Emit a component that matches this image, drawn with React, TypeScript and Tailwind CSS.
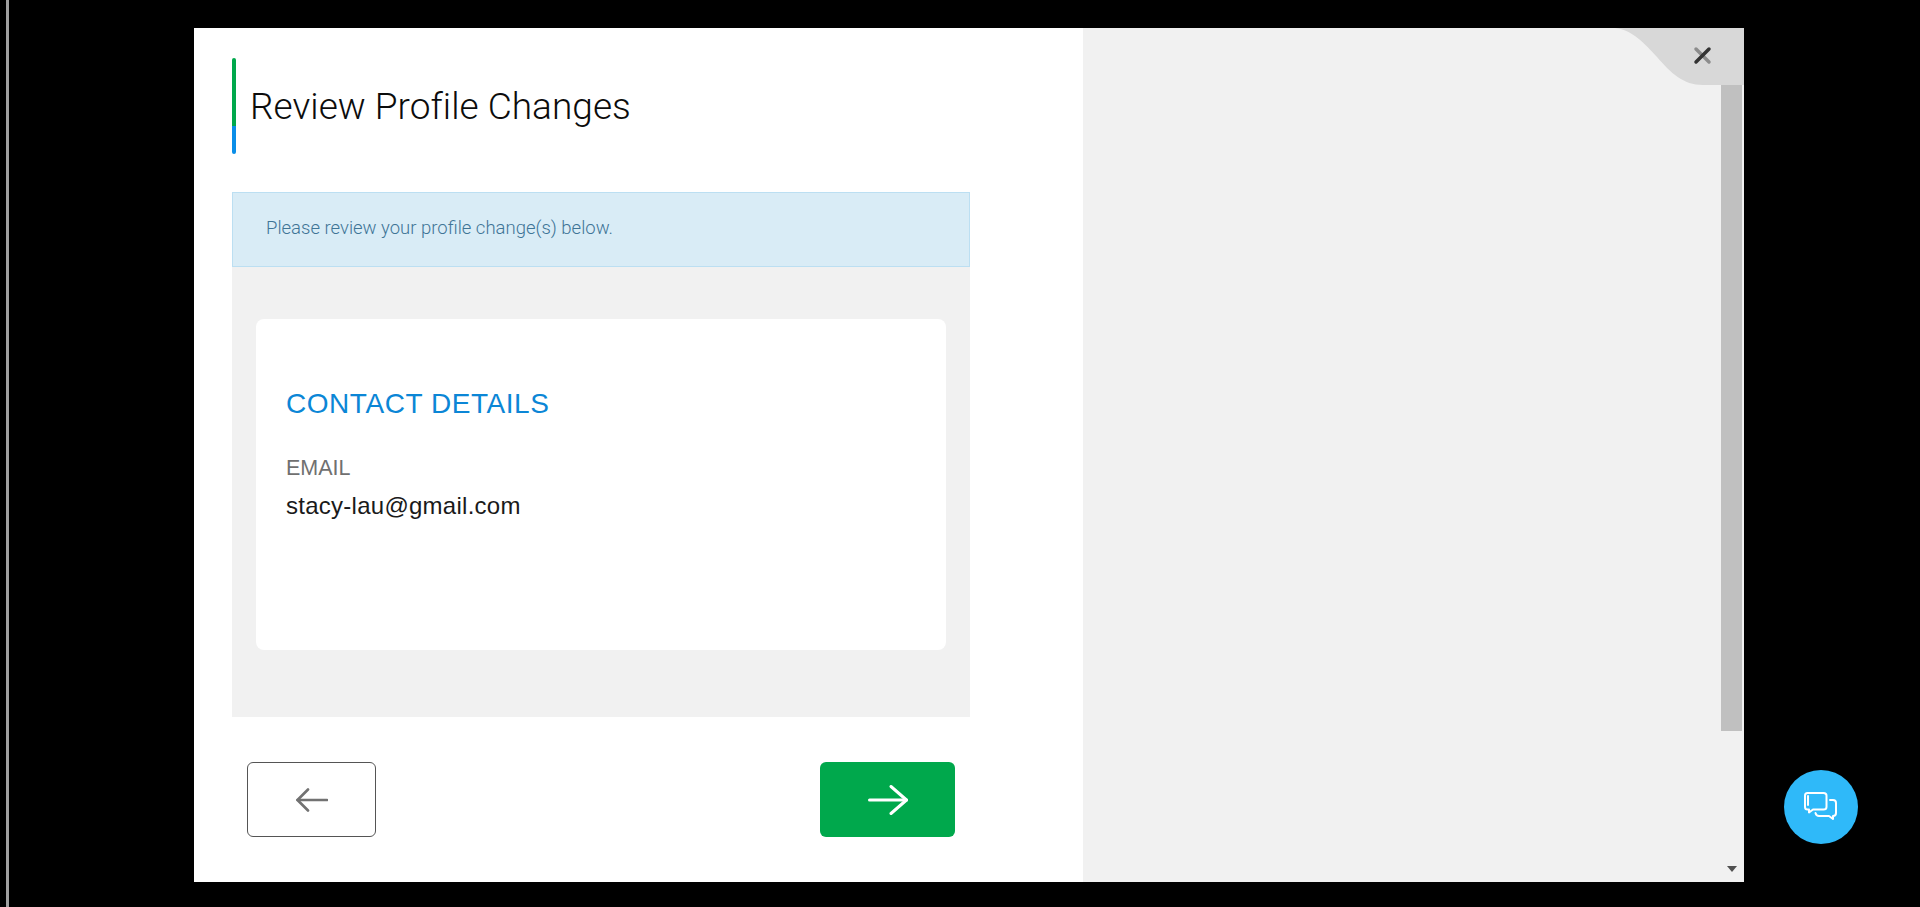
const sans = "font-['Liberation_Sans',Arial,sans-serif]";
const light = "font-['Roboto',Arial,sans-serif] font-light";

function ArrowLeft() {
  return (
    <svg width="32" height="24" viewBox="0 0 32 24" fill="none" stroke="#727272" strokeWidth="2.6" strokeLinecap="round" strokeLinejoin="round">
      <path d="M1.5 12H31" />
      <path d="M12 1.5L1.5 12L12 22.5" />
    </svg>
  );
}

function ArrowRight() {
  return (
    <svg width="40" height="30" viewBox="0 0 40 30" fill="none" stroke="#ffffff" strokeWidth="3" strokeLinecap="round" strokeLinejoin="round">
      <path d="M1.5 15H38.5" />
      <path d="M23 1.5L38.5 15L23 28.5" />
    </svg>
  );
}

function ChatIcon() {
  return (
    <svg width="34" height="30" viewBox="0 0 34 30" fill="none" stroke="#ffffff" strokeWidth="2" strokeLinecap="round" strokeLinejoin="round">
      <path d="M3.5 1H19.5C21 1 22.5 2 22.5 3.5V15C22.5 16.5 21 17.5 19.5 17.5H9L5 20.5V17.5H3.5C2 17.5 1 16.5 1 15V3.5C1 2 2 1 3.5 1Z" />
      <path d="M4 4V13" />
      <path d="M26 8H29C30.5 8 32 9 32 11V21C32 23 30.5 24 29 24V27L25 24H15C13 24 12 23 11.5 21" />
    </svg>
  );
}

export default function App() {
  return (
    <div className={`relative flex h-[907px] w-full overflow-hidden bg-black ${sans}`}>
      <div className="ml-[6px] h-full w-[3px] bg-[#a0a0a0]" />
      <div className="mb-[25px] ml-[185px] mt-[28px] flex w-[1550px]">
        <div className="flex w-[889px] flex-col bg-white pl-[38px]">
          <div className="mt-[30px] flex h-[96px] items-center">
            <div className="flex h-full w-[4px] flex-col overflow-hidden rounded-[2px]">
              <div className="h-[68px] bg-[#00a84c]" />
              <div className="flex-1 bg-[#0a8ee8]" />
            </div>
            <h1 className={`ml-[14px] text-[37px] leading-none tracking-[0.03px] text-[#0c0c0c] ${light}`}>Review Profile Changes</h1>
          </div>
          <div className={`mt-[38px] flex h-[75px] w-[738px] items-center border border-[#bcdff2] bg-[#d9ecf6] pb-[2px] pl-[33px] text-[18.5px] text-[#3f7596] ${light}`}>
            Please review your profile change(s) below.
          </div>
          <div className="w-[738px] bg-[#f1f1f1] px-[24px] pb-[67px] pt-[52px]">
            <div className="h-[331px] rounded-[8px] bg-white px-[30px] pt-[71px]">
              <h2 className="text-[28px] font-normal leading-none tracking-[0.55px] text-[#0b86d6]">CONTACT DETAILS</h2>
              <div className="mt-[40px] text-[21.5px] leading-none text-[#707070]">EMAIL</div>
              <div className="mt-[14px] text-[24px] leading-none tracking-[0.26px] text-[#1a1a1a]">stacy-lau@gmail.com</div>
            </div>
          </div>
          <div className="mt-[45px] flex w-[738px] justify-between pl-[15px] pr-[15px]">
            <button className="flex h-[75px] w-[129px] items-center justify-center rounded-[6px] border border-[#555555] bg-white">
              <ArrowLeft />
            </button>
            <button className="flex h-[75px] w-[135px] items-center justify-center rounded-[6px] bg-[#00a84c]">
              <ArrowRight />
            </button>
          </div>
        </div>
        <div className="relative flex flex-1 justify-end bg-[#f1f1f1]">
          <div className="mr-[2px] flex w-[21px] flex-col items-center">
            <div className="h-[703px] w-full bg-[#c0c0c0]" />
            <div className="mt-auto mb-[10px] h-0 w-0 border-x-[5.5px] border-t-[6px] border-x-transparent border-t-[#505050]" />
          </div>
          <svg className="absolute right-0 top-0" width="129" height="57" viewBox="0 0 129 57">
            <path d="M0 0C18 2 30 16 42 29C56 45 68 57 88 57L129 57L129 0Z" fill="#d8d8d8" />
            <path d="M81 21L94 34" stroke="#8c8c8c" strokeWidth="3.5" strokeLinecap="round" />
            <path d="M94 21L81 34" stroke="#333333" strokeWidth="3.5" strokeLinecap="round" />
          </svg>
        </div>
      </div>
      <button className="absolute left-[1783.5px] top-[770px] flex h-[74px] w-[74px] items-center justify-center rounded-full bg-[#2fb9f9]">
        <ChatIcon />
      </button>
    </div>
  );
}
